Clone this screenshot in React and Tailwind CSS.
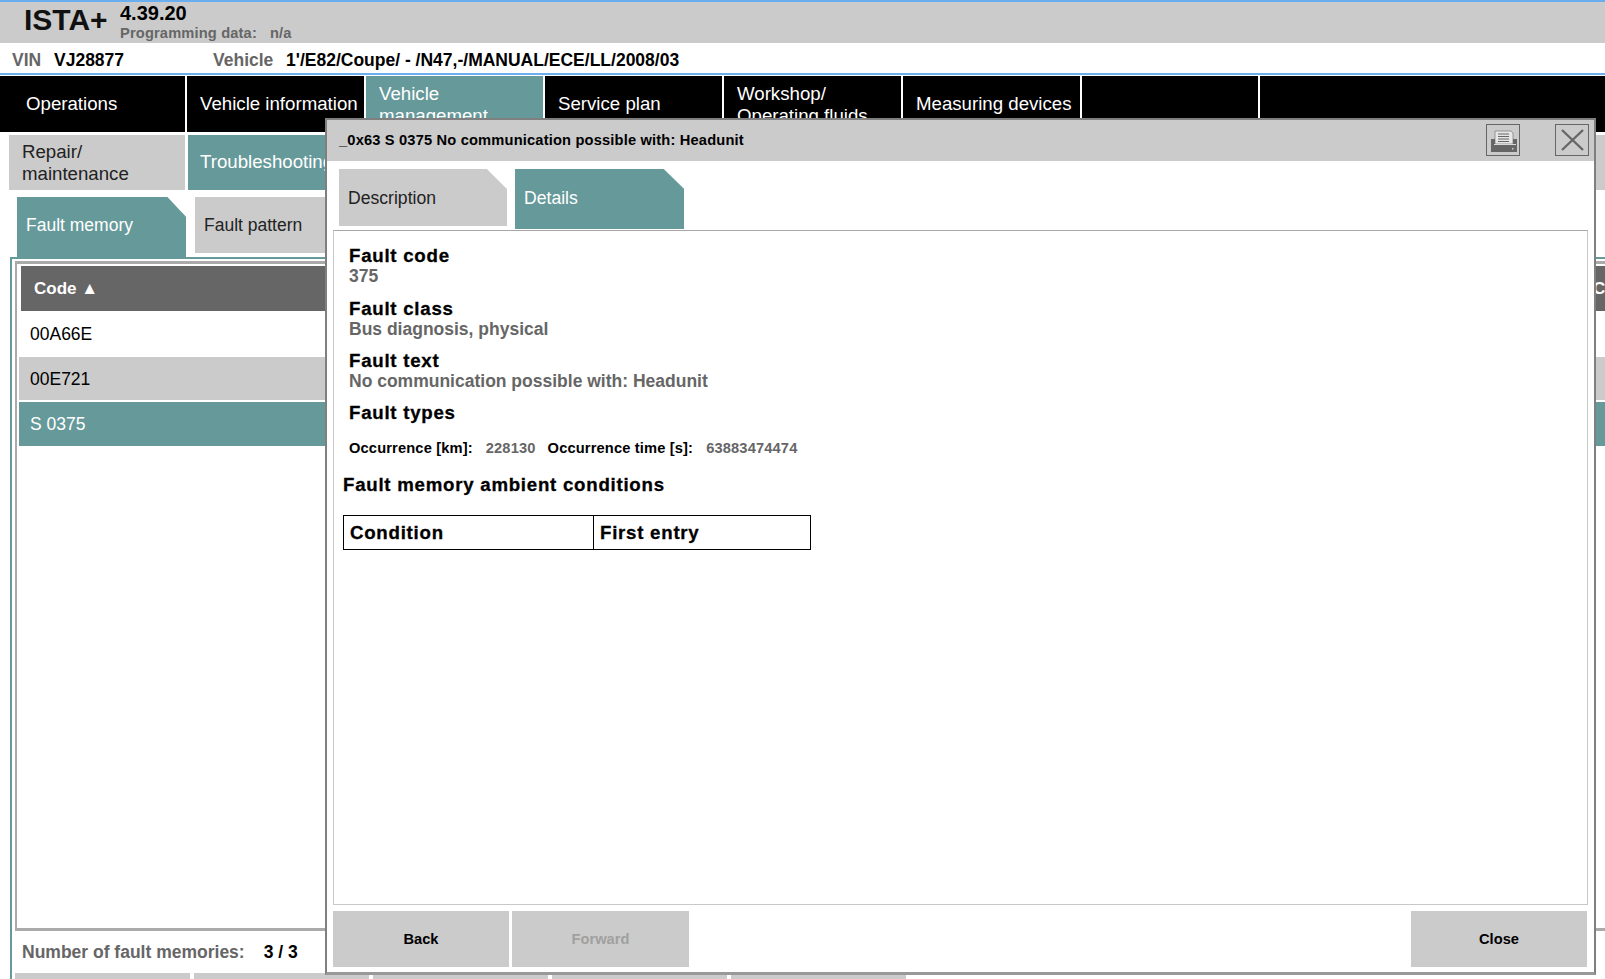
import React from "react";

const FONT = "font-['Liberation_Sans',Arial,sans-serif]";

// top level nav
const mainTabs = [
  { label: "Operations", w: "w-[185px]" },
  { label: "Vehicle information", w: "w-[177px]" },
  { label: "Vehicle management", w: "w-[177px]", active: true, wrap: true },
  { label: "Service plan", w: "w-[177px]" },
  { label: "Workshop/ Operating fluids", w: "w-[177px]", wrap: true },
  { label: "Measuring devices", w: "w-[177px]" },
  { label: "", w: "w-[176px]" },
  { label: "", w: "flex-1" },
];

const rows = [
  { code: "00A66E", cls: "h-[42px] bg-white text-black" },
  { code: "00E721", cls: "h-[43px] pt-px bg-[#cbcbcb] text-black" },
  { code: "S 0375", cls: "h-[44px] pt-px bg-[#669999] text-white" },
];

function PrinterIcon() {
  return (
    <svg viewBox="0 0 32 30" className="w-[32px] h-[30px]">
      <path d="M8 6h16l2 2v11H8z" fill="#e6e6e6" stroke="#777" strokeWidth="0.7" />
      <path d="M11 9h11M11 11.5h11M11 14h11M11 16.5h11" stroke="#666" strokeWidth="1.1" />
      <path d="M4 14h4v5h18v-5h4v13H4z" fill="#666" />
      <path d="M7 19.5h22" stroke="#d8d8d8" strokeWidth="1" />
      <rect x="25" y="23" width="1.5" height="1.5" fill="#cbcbcb" />
    </svg>
  );
}

function CloseIcon() {
  return (
    <svg viewBox="0 0 32 30" className="w-[32px] h-[30px]">
      <path d="M6 5L27 25M27 5L6 25" stroke="#666" strokeWidth="2.4" fill="none" />
    </svg>
  );
}

function DetailBlock({ title, value }) {
  return (
    <div className="mb-[12px] first:mb-[13px]">
      <div className="text-[18.67px] leading-[20px] font-bold text-black tracking-[0.75px] [-webkit-text-stroke:0.3px_black]">{title}</div>
      {value && <div className="text-[17.5px] leading-[20px] font-bold text-[#666666]">{value}</div>}
    </div>
  );
}

function Dialog() {
  return (
    <div className="absolute left-[325px] top-[118px] w-[1271px] h-[857px] bg-white border-2 border-[#7f7f7f] border-b-[3px] border-b-[#999999] flex flex-col">
      <div className="h-[41px] bg-[#cbcbcb] flex items-center justify-between pl-[12px] pr-[5px] shrink-0">
        <span className="text-[14.67px] font-bold text-black tracking-[0.17px] -mt-[2px]">_0x63 S 0375 No communication possible with: Headunit</span>
        <div className="flex gap-[35px] -mt-px">
          <div className="w-[34px] h-[32px] border border-[#666666] flex items-center justify-center">
            <PrinterIcon />
          </div>
          <div className="w-[34px] h-[32px] border border-[#666666] flex items-center justify-center">
            <CloseIcon />
          </div>
        </div>
      </div>
      <div className="flex gap-[8px] pl-[12px] pt-[8px] h-[69px] shrink-0">
        <div className="w-[168px] h-[57px] bg-[#cbcbcb] [clip-path:polygon(0_0,88%_0,100%_35%,100%_100%,0_100%)] flex items-center pl-[9px] pt-[2px] text-[17.6px] text-[#222222]">
          Description
        </div>
        <div className="w-[169px] h-[60px] bg-[#669999] [clip-path:polygon(0_0,88%_0,100%_33%,100%_100%,0_100%)] flex items-center pl-[9px] pb-[1px] text-[17.6px] text-white">
          Details
        </div>
      </div>
      <div className="ml-[6px] w-[1255px] h-[675px] border border-[#c8c8c8] border-t-[#a8a8a8] pl-[9px] shrink-0">
        <div className="pl-[6px] pt-[15px]">
          <DetailBlock title="Fault code" value="375" />
          <DetailBlock title="Fault class" value="Bus diagnosis, physical" />
          <DetailBlock title="Fault text" value="No communication possible with: Headunit" />
          <DetailBlock title="Fault types" />
          <div className="flex text-[14.67px] leading-[20px] font-bold tracking-[0.15px] mt-[15px]">
            <span className="text-black">Occurrence [km]:</span>
            <span className="text-[#666666] ml-[13px]">228130</span>
            <span className="text-black ml-[12px]">Occurrence time [s]:</span>
            <span className="text-[#666666] ml-[13px]">63883474474</span>
          </div>
        </div>
        <div className="text-[18.67px] leading-[20px] font-bold text-black tracking-[0.75px] [-webkit-text-stroke:0.3px_black] mt-[17px]">Fault memory ambient conditions</div>
        <div className="mt-[20px] w-[468px] h-[35px] border border-black flex text-[18.67px] font-bold tracking-[0.75px] [-webkit-text-stroke:0.3px_black] text-black">
          <div className="w-[250px] border-r border-black pl-[6px] flex items-center">Condition</div>
          <div className="flex-1 pl-[6px] flex items-center">First entry</div>
        </div>
      </div>
      <div className="flex ml-[6px] mt-[6px] gap-[3px] text-[14.67px] font-bold">
        <div className="w-[176px] h-[56px] bg-[#cbcbcb] flex items-center justify-center text-black">Back</div>
        <div className="w-[177px] h-[56px] bg-[#cbcbcb] flex items-center justify-center text-[#a0a0a0]">Forward</div>
        <div className="w-[176px] h-[56px] bg-[#cbcbcb] flex items-center justify-center text-black ml-auto mr-[7px]">Close</div>
      </div>
    </div>
  );
}

export default function App() {
  return (
    <div className={`relative w-[1605px] h-[979px] overflow-hidden bg-white ${FONT}`}>
      {/* header */}
      <div className="h-[43px] bg-[#cbcbcb] border-t-2 border-[#6aaef0] flex pl-[24px]">
        <div className="text-[30px] leading-[36px] font-bold text-[#111111] w-[96px]">ISTA+</div>
        <div className="pt-px">
          <div className="text-[20px] leading-[20px] text-black font-bold">4.39.20</div>
          <div className="text-[14.67px] leading-[20px] font-bold text-[#666666] tracking-[0.15px]">
            Programming data:<span className="ml-[13px]">n/a</span>
          </div>
        </div>
      </div>
      {/* vehicle line */}
      <div className="h-[32px] pt-[5px] border-b-2 border-[#6aaef0] flex items-center pl-[12px] text-[17.5px] font-bold">
        <span className="text-[#666666] w-[42px]">VIN</span>
        <span className="text-black w-[159px]">VJ28877</span>
        <span className="text-[#666666] w-[73px]">Vehicle</span>
        <span className="text-black">1'/E82/Coupe/ - /N47,-/MANUAL/ECE/LL/2008/03</span>
      </div>
      {/* main nav */}
      <div className="flex gap-[2px] h-[56px] mt-px bg-white">
        {mainTabs.map((t, i) => (
          <div
            key={i}
            className={`${t.w} h-full overflow-hidden flex pl-[13px] text-[18.67px] leading-[22px] ${t.wrap ? "pt-[7px] pr-[10px]" : "items-center pr-0"} ${t.active ? "bg-[#669999] text-white" : "bg-black text-white"} ${i === 0 ? "pl-[26px]" : ""}`}
          >
            <span className={t.wrap ? "" : "whitespace-nowrap"}>
              {t.wrap ? (
                <>
                  {t.label.split(" ")[0]}
                  <br />
                  {t.label.split(" ").slice(1).join(" ")}
                </>
              ) : (
                t.label
              )}
            </span>
          </div>
        ))}
      </div>
      {/* second nav */}
      <div className="flex gap-[3px] h-[55px] mt-[3px] pl-[9px]">
        <div className="w-[176px] bg-[#cbcbcb] text-[#222222] text-[18.67px] leading-[22px] pl-[13px] pt-[6px]">
          Repair/<br />maintenance
        </div>
        <div className="w-[320px] bg-[#669999] text-white text-[18.67px] flex items-center pl-[12px] pb-[2px]">Troubleshooting</div>
        <div className="flex-1 bg-[#cbcbcb]" />
      </div>
      {/* third nav */}
      <div className="flex gap-[9px] h-[60px] mt-[7px] pl-[17px]">
        <div className="w-[169px] h-[60px] bg-[#669999] [clip-path:polygon(0_0,89%_0,100%_33%,100%_100%,0_100%)] text-white text-[17.5px] flex items-center pl-[9px] pb-[4px]">
          Fault memory
        </div>
        <div className="w-[169px] h-[56px] bg-[#cbcbcb] text-[#222222] text-[17.5px] flex items-center pl-[9px]">
          Fault pattern
        </div>
      </div>
      {/* fault list */}
      <div className="absolute left-[10px] top-[257px] right-0 bottom-0 border-l-2 border-t-2 border-[#669999] pl-[3px] pt-[2px]">
        <div className="h-[670px] border-l-2 border-t-[3px] border-b-[3px] border-[#aaaaaa] pt-[2px]">
          <div className="h-[45px] ml-[4px] bg-[#666666] text-white font-bold text-[17px] flex items-center pl-[13px] whitespace-nowrap overflow-hidden">
            <span>Code ▲</span>
            <span className="ml-[1495px]">Class</span>
          </div>
          {rows.map((r) => (
            <div key={r.code} className={`ml-[2px] mt-[2px] first:mt-0 flex items-center pl-[11px] text-[17.5px] ${r.cls}`}>{r.code}</div>
          ))}
        </div>
        <div className="h-[42px] flex items-center pl-[7px] text-[17.5px] font-bold">
          <span className="text-[#666666]">Number of fault memories:</span>
          <span className="text-black ml-[19px]">3 / 3</span>
        </div>
        <div className="flex gap-[4px] h-[8px]">
          <div className="w-[175px] bg-[#cbcbcb]" />
          <div className="w-[175px] bg-[#cbcbcb]" />
          <div className="w-[175px] bg-[#cbcbcb]" />
          <div className="w-[175px] bg-[#cbcbcb]" />
          <div className="w-[175px] bg-[#cbcbcb]" />
        </div>
      </div>
      <Dialog />
    </div>
  );
}
